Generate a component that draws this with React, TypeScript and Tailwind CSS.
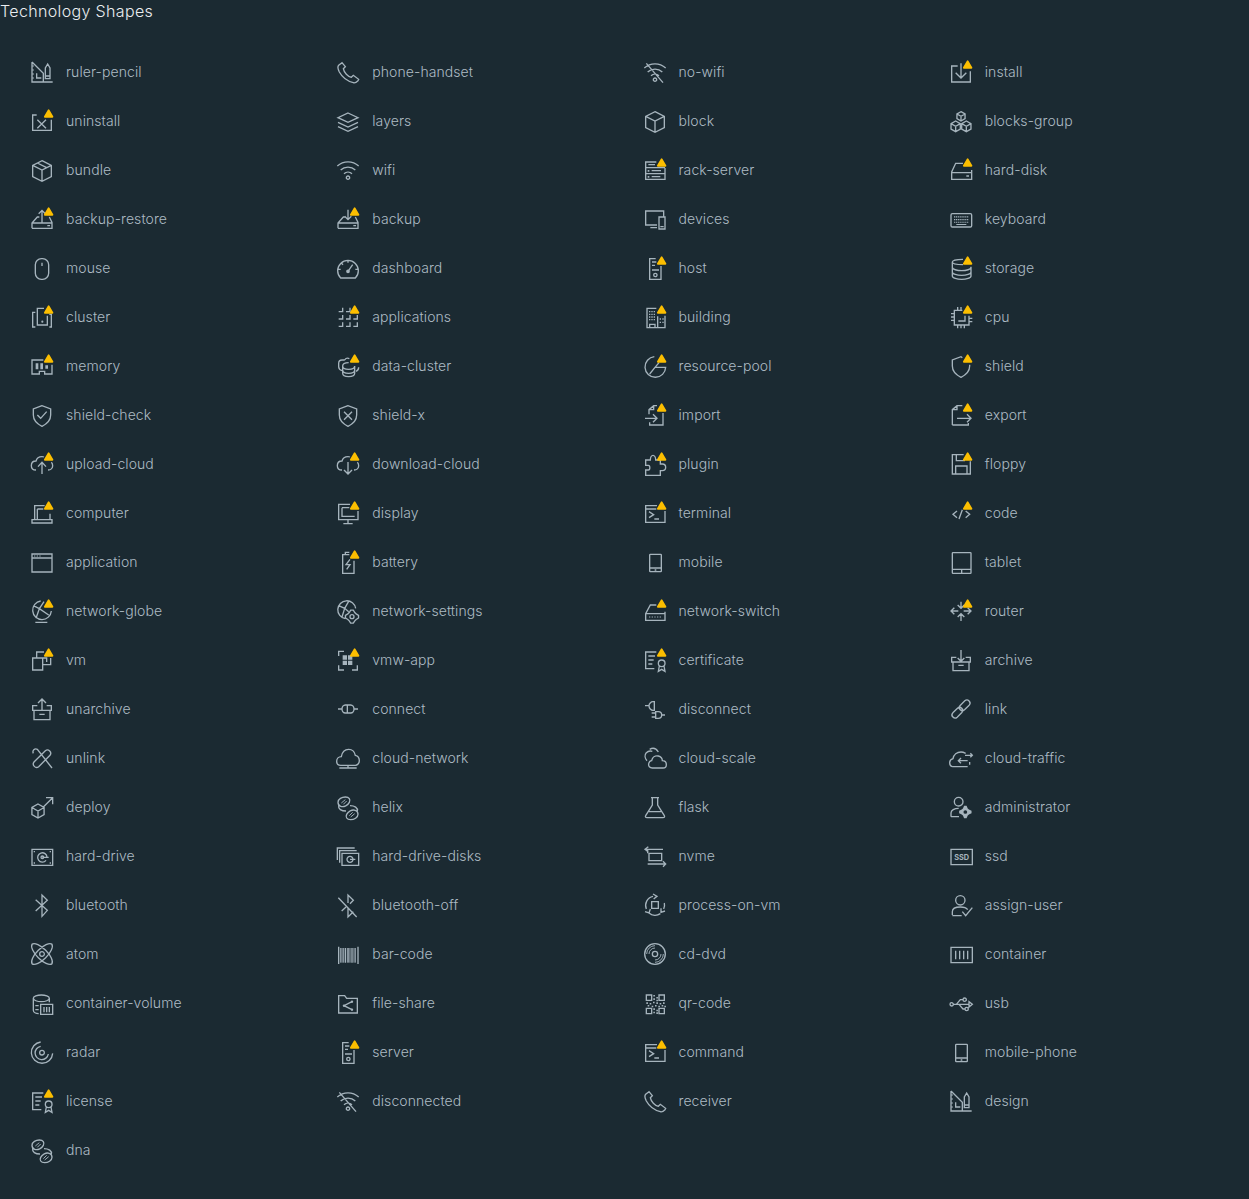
type Glyph = { d: string; thin?: string; fill?: string; label?: string };

// icons are drawn on Clarity's 36 unit grid and shown at 24px
const c = (x: number, y: number, r: number) => `M${x - r} ${y}a${r} ${r} 0 1 0 ${2 * r} 0a${r} ${r} 0 1 0 ${-2 * r} 0Z`;
const cube = (x: number, y: number, r: number) => {
  const w = r * 0.87;
  const h = r / 2;
  return `M${x} ${y - r}l${w} ${h}v${r}l${-w} ${h}l${-w} ${-h}v${-r}Z M${x - w} ${y - h}L${x} ${y}L${x + w} ${y - h} M${x} ${y}v${r}`;
};
const teeth = (x: number, y: number, R: number, r: number) => {
  let out = "";
  for (let i = 0; i < 16; i++) {
    const a = ((i + 0.5) / 16) * Math.PI * 2;
    const rad = Math.floor((i + 1) / 2) % 2 === 0 ? R : r;
    out += `${i === 0 ? "M" : "L"}${(x + rad * Math.cos(a)).toFixed(2)} ${(y + rad * Math.sin(a)).toFixed(2)}`;
  }
  return `${out}Z`;
};
const squares = (pts: number[][], s: number) => pts.map(([x, y]) => `M${x} ${y}h${s}v${s}h${-s}Z`).join(" ");
const keys = (y: number, from: number, n: number) =>
  squares(Array.from({ length: n }, (_, i) => [from + i * 2.8, y]), 1.8);
const cell = (x: number, y: number) => `M${x} ${y + 6}h6V${y}`;

const DISK = "M3 32V24L11 15H14 M29 15L33 23V32H3 M3 24H33 M26 28H30";
const SHIELD = "M18 4L5 9V18C5 26 10 31 18 35C26 31 31 26 31 18V9Z";
const WIFI = "M2 12A24 24 0 0 1 34 12 M7 18A16 16 0 0 1 29 18 M12 23.5A9 9 0 0 1 24 23.5";
const CLOUD_L = "M9 27C4.5 27 2 24 2 20.5C2 16 5 13.5 9 13.5C10 9.5 13.5 7 18 7C19 7 20 7 21 7.5";
const CLOUD_R = "M27 27C31 27 34 24 34 20.5C34 18.5 33.5 17 32 15.5";
const GLOBE = "M5 10L14 14.5L28 24 M14 14.5L21 4 M14 14.5L9 29";

const ruler: Glyph = {
  d: "M3 3V33H34 M3 3L20 20V33 M10 20V27H17 M23 28V12L26.5 6L30 12V28Z M23 24H30",
  thin: "M3 9H6 M3 15H6 M3 21H6 M3 27H6",
};
const phone: Glyph = { d: "M9 4L4 8C2 10 3 14 5 18C10 27 18 32 26 34C29 35 31 33 33 31L34 29L26 23L23 26C18 25 12 19 11 13L14 10Z" };
const noWifi: Glyph = { d: `${WIFI} ${c(18, 29.5, 2.5)} M5 5L30 34` };
const tower: Glyph = { d: `M19 4H10V35H27V15 M13.5 9H20 M13.5 14H18 M13.5 21H24 ${c(18.5, 28.5, 2.5)}` };
const shell: Glyph = { d: "M21 7H4V32H33V15 M4 12H20 M9 16L16 20.5L9 25 M17 27H24" };
const cert: Glyph = { d: `M20 6H4V31H17 M8 12H18 M8 18H16 M8 24H14 ${c(28, 23, 5)} M24.5 27L23 35L28 32L33 35L31.5 27` };
const helix: Glyph = {
  d: "M3 11C3 6 9 3 14 3C20 3 22 7 20 11C18 15 12 19 7 17C4 16 3 14 3 11Z M33 29C33 34 27 37 22 37C16 37 14 33 16 29C18 25 24 21 29 23C32 24 33 26 33 29Z M4 16C3 21 8 24 15 24 M32 24C33 19 28 16 21 16",
  thin: "M8 12L14 7 M11 14L16 9 M28 28L22 33 M25 26L20 31",
};
const mobile: Glyph = { d: "M11 6.5H26.5A1 1 0 0 1 27.5 7.5V31.5A1 1 0 0 1 26.5 32.5H11A1 1 0 0 1 10 31.5V7.5A1 1 0 0 1 11 6.5Z M10 27H27.5 M17.5 30H20" };

const icons: Record<string, Glyph> = {
  "ruler-pencil": ruler,
  "phone-handset": phone,
  "no-wifi": noWifi,
  install: { d: "M13 9H4V33H32V17 M18 5V27 M10 19L18 27L26 19" },
  uninstall: { d: "M10 9H4V32H32V16 M11 16L24 29 M24 16L11 29" },
  layers: { d: "M18 6L33 13L18 20L3 13Z M3 20L18 27L33 20 M3 26.5L18 33.5L33 26.5" },
  block: { d: "M18 4L32 11V28L18 35L4 28V11Z M4 11L18 18L32 11 M18 18V35" },
  "blocks-group": { d: `${cube(18, 11, 7)} ${cube(10, 26, 8)} ${cube(26, 26, 8)}` },
  bundle: { d: "M18 4L32 11V28L18 35L4 28V11Z M4 11L18 18L32 11 M18 18V35 M11 7.5L25 14.5" },
  wifi: { d: `${WIFI} ${c(18, 29.5, 2.5)}` },
  "rack-server": { d: "M20 6H4V32H33V15 M4 14.5H33 M4 23.5H33 M8 10H18 M13 19H27 M13 28H26", fill: squares([[7, 18], [7, 27]], 2.5) },
  "hard-disk": { d: "M21 8H10L4 21V32H34V18 M4 22H34 M26 27H30" },
  "backup-restore": { d: `${DISK} M18 23V5 M13 10L18 5L23 10` },
  backup: { d: `${DISK} M18 4V19 M13 14L18 19L23 14` },
  devices: { d: "M21 27H4V6H31V14 M11 31H21 M24 15H33V33H24Z M26 29.5H31" },
  keyboard: {
    d: "M5 10H32A2 2 0 0 1 34 12V28A2 2 0 0 1 32 30H5A2 2 0 0 1 3 28V12A2 2 0 0 1 5 10Z",
    fill: `${keys(14, 7.5, 8)} ${keys(18, 7.5, 8)} ${keys(22, 7.5, 8)} M11 25.5H26V27H11Z`,
  },
  mouse: { d: "M17 4H19A9 9 0 0 1 28 13V26A9 9 0 0 1 19 35H17A9 9 0 0 1 8 26V13A9 9 0 0 1 17 4Z M18 10V15" },
  dashboard: { d: "M7 33A15.5 15.5 0 1 1 29 33Z M18 23L25 13 M18 6V10 M3 20H7 M29 20H33 M7.5 10L10.5 13", fill: c(18, 23, 2.8) },
  host: tower,
  storage: { d: "M21 5C11 5 5 7 5 9V30C5 33 12 35 19 35S33 33 33 30V16 M5 9C5 12 14 13 21 13 M5 17C5 20 12 22 19 22S33 20 33 17 M5 24C5 27 12 29 19 29S33 27 33 24" },
  cluster: { d: "M21 5H11V30H26V16 M8 11H4V33H8 M29 14H32V33H29", fill: c(18.5, 25, 1.6) },
  applications: { d: `${cell(4, 4)} ${cell(15, 4)} ${cell(4, 15)} ${cell(15, 15)} ${cell(26, 15)} ${cell(4, 26)} ${cell(15, 26)} ${cell(26, 26)}` },
  building: {
    d: "M20 5H6V34H33V16 M22 17V34 M10 34V29H18V34",
    fill: squares([[9, 9], [12.5, 9], [16, 9], [9, 13], [12.5, 13], [16, 13], [9, 17], [12.5, 17], [16, 17], [9, 21], [12.5, 21], [16, 21], [25, 20], [29, 20], [25, 25], [29, 25]], 2),
  },
  cpu: { d: "M20 8H8V30H30V16 M24 16V24H14 M3 13H7 M3 18H7 M3 23H7 M31 20H35 M31 25H35 M13 3V7 M18 3V7 M13 31V35 M18 31V35 M23 31V35" },
  memory: { d: "M20 9H3V30H14V26H22V30H33V16", fill: squares([[8.5, 14], [15.5, 14]], 4) + " M23 17H27V22H23Z M8.5 18H12.5V23H8.5Z M15.5 18H19.5V23H15.5Z" },
  "data-cluster": {
    d: "M10 18V29C10 32 14 34 19 34S28 32 28 29V18 M10 18C10 15 14 13 19 13 M10 18C10 21 14 23 19 23S28 21 28 18 M10 24C10 27 14 29 19 29S28 27 28 24 M13 9H9C6 9 4 11 4 14V19C4 22 6 24 9 25 M13 9C15 6 18 6 20 7 M30 26C33 25 34 23 34 20",
  },
  "resource-pool": { d: "M17 4A15.5 15.5 0 1 0 34 20H18L10 30 M18 20L24 13" },
  shield: { d: "M20 5.5L18 4L5 9V18C5 26 10 31 18 35C26 31 31 26 31 18V16" },
  "shield-check": { d: `${SHIELD} M11 18L16 23L25 13` },
  "shield-x": { d: `${SHIELD} M12 13L24 25 M24 13L12 25` },
  import: { d: "M9 17V10L16 4H21 M30 15V33H10V29 M16 4V10H9 M3 23H20 M15 17L21 23L15 29" },
  export: { d: "M5 33V10L12 4H20 M5 33H29V30 M12 4V10H5 M12 23H33 M27 17L33 23L27 29" },
  "upload-cloud": { d: `${CLOUD_L} ${CLOUD_R} M18 33V16 M12 22L18 15.5L24 22` },
  "download-cloud": { d: `${CLOUD_L} ${CLOUD_R} M18 15V33 M12 27L18 33L24 27` },
  plugin: { d: "M4 12H11C11 8 13 5 15 5S19 8 19 12H26V18H29C32 18 34 20 34 23S32 28 29 28H26V35H4V27H8C11 27 11 20 8 20H4Z" },
  floppy: { d: "M22 4H5V33H32V14 M11 4V13H24 M10 33V21H27V33" },
  computer: { d: "M22 7H7V28 M30 19V28 M3 28H33V33H3Z M11 12H20 M11 12V28" },
  display: { d: "M21 5H4V28H33V15 M18 28V34 M11 34H25 M9 10H20 M9 10V23H28" },
  terminal: shell,
  code: { d: "M12 15L6 20L12 25 M15 27L20 13 M25 15L31 20L25 25" },
  application: { d: "M3 6H33V33H3Z M3 12H33", thin: "M6 9H8 M10 9H12 M14 9H16" },
  battery: { d: "M20 7H10V35H27V16 M14 7V3.5H20 M21 14L15 22H21L16 29" },
  mobile,
  tablet: { d: "M6 4H32A1 1 0 0 1 33 5V34A1 1 0 0 1 32 35H6A1 1 0 0 1 5 34V5A1 1 0 0 1 6 4Z M5 29H33 M19 29V35" },
  "network-globe": { d: `M16 3A14 14 0 1 0 32 18 ${GLOBE} M8 35H26` },
  "network-settings": {
    d: `M29.5 14A13.5 13.5 0 1 0 14 29.5 M4 10L13 14L19 19 M13 14L19 3.5 M13 14L9 27 ${teeth(24, 26.5, 10, 7.5)} ${c(24, 26.5, 3)}`,
  },
  "network-switch": { d: "M20 9H11L4 22V32H33V19 M4 22H33", thin: "M9 27H11 M13 27H15 M17 27H19 M21 27H23 M25 27H27" },
  router: { d: "M14 18H3 M8 13L3 18L8 23 M22 18H33 M28 13L33 18L28 23 M18 4V14 M13 9L18 14L23 9 M18 33V22 M13 27L18 22L23 27" },
  vm: { d: "M10 15V6H21 M31 15V25H19 M4 15H19V33H4Z M19 15H25V21", fill: squares([[24, 10]], 2) },
  "vmw-app": {
    d: "M12 5H4V12 M4 26V33H12 M24 33H32V26",
    fill: squares([[10, 11], [18, 11], [10, 19], [18, 19]], 6.5),
  },
  certificate: cert,
  archive: { d: "M18 3V20 M13 15L18 20L23 15 M11 14H4V21H32V14H25 M6 21V34H30V21 M14 26H22" },
  unarchive: { d: "M18 20V3 M12 9L18 3L24 9 M11 13H4V20H32V13H25 M6 20V34H30V20 M14 26H22" },
  connect: { d: "M3 18H9 M27 18H33 M14 12H22C25 12 27 15 27 18S25 24 22 24H14C11 24 9 21 9 18S11 12 14 12Z M17 12V24" },
  disconnect: { d: "M3 13H9 M9 13C9 10 12 7 15 7H17V20H15C12 20 9 17 9 13Z M19 22H23C26 22 28 24 28 27S26 32 23 32H19Z M28 27H33 M13 24H19 M13 30H19" },
  link: {
    d: "M23.75 5.75A4.6 4.6 0 0 1 30.25 12.25L23.25 19.25A4.6 4.6 0 0 1 16.75 12.75Z M19.25 23.25L12.25 30.25A4.6 4.6 0 0 1 5.75 23.75L12.75 16.75A4.6 4.6 0 0 1 19.25 23.25Z",
  },
  unlink: { d: "M23 7A5 5 0 0 1 30 14L13 31A5 5 0 0 1 6 24Z M5 11C3 7 7 3 11 5L33 33" },
  "cloud-network": { d: "M7 29C3 29 1 26 1 23C1 19 4 16 8 16C9 10 13 5 19 5C25 5 28 9 29 14C33 15 35 18 35 22C35 26 32 29 29 29Z M18 29V33 M5 33H31" },
  "cloud-scale": { d: "M14 33C10 33 8 30 8.5 27C9 24 11 22 13 22C14 17 18 14 23 15C27 16 29 19 29 22C33 22 35 25 35 28C35 31 33 33 30 33Z M6 22C3 19 2 14 5 10C7 8 11 7 14 8 M10 5C15 2 20 4 23 9" },
  "cloud-traffic": { d: "M5 31C2 30 1 27 1 25C1 22 3 20 6 19C7 13 12 9 18 9C20 9 23 10 25 11 M5 31H28 M31 24V28 M24 14H35 M32 11L35 14L32 17 M28 22H14 M18 18L14 22L18 26" },
  deploy: { d: `M34 4L20 18 M24 4H34V14 ${cube(12, 24, 10.5)}` },
  helix,
  flask: { d: "M12 4H24 M14 4V15L4 31C3 33 4 34 6 34H30C32 34 33 33 32 31L22 15V4 M9 25H27" },
  administrator: { d: `${c(14.5, 10, 6.5)} M3 32.5V27C3 23 8 20 14.5 20 M3 32.5H15`, fill: teeth(24.5, 25.5, 9.5, 6.5) + c(24.5, 25.5, 2.8) },
  "hard-drive": {
    d: `M3 8H34V32H3Z ${c(18.5, 20, 2)} M25.5 20A7 7 0 1 0 24 24.5 M18.5 20H28`,
    fill: squares([[5.5, 10.5], [29.5, 10.5], [5.5, 27.5], [29.5, 27.5]], 2),
  },
  "hard-drive-disks": { d: `M2 24V6H28 M5.5 28V10H31 M9 14H34V32H9Z ${c(21, 23, 4.5)} M21 23H29` },
  nvme: { d: "M9 14H28V25H9Z M7 14V8 M3 8H30 M8 4L3 8L8 12 M7 30H34 M30 26L34 30L30 34" },
  ssd: { d: "M3 8H35V31H3Z", label: "SSD" },
  bluetooth: { d: "M8.5 10L26 26L18 35V3L26 11L8.5 27" },
  "bluetooth-off": { d: "M3.5 7L31 36 M18 15V3L26 11L21 16 M18 22V36L26 28 M8.5 27L15 21" },
  "process-on-vm": { d: "M13 13H23V23H13Z M5 24A14 14 0 0 1 15 5 M15 1.5L21 5L16 9 M32 15A14 14 0 0 1 31 24 M33 27L27 29L27 23 M26 31A14 14 0 0 1 9 30 M3 28L9 30L11 24" },
  "assign-user": { d: `${c(17, 11, 7)} M5 33V28C5 23 10 21 17 21C22 21 26 22 28 25 M5 34H19 M20 28L25 34L35 22` },
  atom: { d: `M3.2 3.2A21 8.5 45 0 1 32.8 32.8A21 8.5 45 0 1 3.2 3.2Z M32.8 3.2A21 8.5 -45 0 1 3.2 32.8A21 8.5 -45 0 1 32.8 3.2Z ${c(18, 18, 3.5)}` },
  "bar-code": { d: "M4 7V33 M14 9V31 M24 9V31 M33 7V33", thin: "M7 9V31 M9 9V31 M11 9V31 M17 9V31 M19 9V31 M21 9V31 M27 9V31 M29 9V31" },
  "cd-dvd": { d: `${c(18, 18, 15.5)} ${c(18, 18, 4)}`, thin: "M9 18A9 9 0 0 1 18 9 M27 18A9 9 0 0 1 18 27 M5.5 18A12.5 12.5 0 0 1 18 5.5 M30.5 18A12.5 12.5 0 0 1 18 30.5" },
  container: { d: "M3 8H35V31H3Z M10 13V26 M16 13V26 M22 13V26 M28 13V26" },
  "container-volume": { d: "M5 11V29C5 32 9 34 13 34 M5 11C5 8 11 6 17 6S29 8 29 11V17 M5 11C5 14 11 16 17 16S29 14 29 11 M8 22H13 M8 28H13 M16 20H34V35H16Z M21 24V32 M25 24V32 M29 24V32" },
  "file-share": { d: "M4 7H13L16 11H32V33H4Z M24 16L12 22L24 28", fill: `${c(24, 16, 1.8)}${c(12, 22, 1.8)}${c(24, 28, 1.8)}` },
  "qr-code": {
    d: "M5 6H13V14H5Z M24 6H32V14H24Z M5 26H13V34H5Z M24 26H32V34H24Z",
    fill: squares([[15.5, 6], [20, 9], [15.5, 11], [20, 13], [5, 17], [10, 18], [15, 16], [20, 17], [25, 18], [30, 17], [7, 21], [13, 22], [18, 21], [23, 22], [28, 21], [32, 22], [15.5, 26], [20, 28], [15.5, 31], [20, 32]], 2.4),
  },
  usb: { d: `${c(4, 20, 2.5)} M6.5 20H30 M30 16V24L35 20Z M11 20L17 13H21 ${c(23.5, 13, 2.5)} M15 20L21 27H24 ${c(26.5, 27, 2.5)}` },
  radar: { d: `M16 3A16 16 0 1 0 34 20 M16 9.5A10 10 0 1 0 27.5 21 ${c(18, 19, 3.5)}` },
  server: tower,
  command: shell,
  "mobile-phone": mobile,
  license: cert,
  disconnected: noWifi,
  receiver: phone,
  design: ruler,
  dna: helix,
};

const warned = new Set([
  "install", "uninstall", "rack-server", "hard-disk", "backup-restore", "backup", "host", "storage", "cluster", "applications",
  "building", "cpu", "memory", "data-cluster", "resource-pool", "shield", "import", "export", "upload-cloud", "download-cloud",
  "plugin", "floppy", "computer", "display", "terminal", "code", "battery", "network-globe", "network-switch", "router", "vm",
  "vmw-app", "certificate", "server", "command", "license",
]);

function Shape({ name }: { name: string }) {
  const g = icons[name];
  return (
    <svg viewBox="0 0 36 36" className="h-6 w-6 shrink-0 overflow-visible text-[#a6b4bd]" fill="none" stroke="currentColor" strokeWidth={2}>
      <path d={g.d} />
      {g.thin && <path d={g.thin} strokeWidth={1.4} />}
      {g.fill && <path d={g.fill} fill="currentColor" fillRule="evenodd" stroke="none" />}
      {g.label && (
        <text x="19" y="24.5" textAnchor="middle" fill="currentColor" stroke="none" fontSize="11" fontWeight="700" className="[font-family:Inter,sans-serif]">
          {g.label}
        </text>
      )}
      {warned.has(name) && (
        <path
          d="M26.85 1.14L21.13 11A1.28 1.28 0 0 0 22.23 13H33.68A1.28 1.28 0 0 0 34.78 11L29.06 1.14A1.28 1.28 0 0 0 26.85 1.14Z"
          fill="#fcbe00"
          stroke="none"
        />
      )}
    </svg>
  );
}

export default function App() {
  return (
    <div className="h-[1199px] overflow-hidden bg-[#1b2a32] [font-family:Inter,sans-serif]">
      <h1 className="text-base leading-[22px] font-light tracking-[0.35px] text-[#eaedf0]">Technology Shapes</h1>
      <div className="mt-[25.5px] grid w-[1225px] grid-cols-4">
        {Object.keys(icons).map((name) => (
          <div key={name} className="flex h-[49px] items-center gap-3 pl-[30px]">
            <Shape name={name} />
            <span className="text-sm font-light tracking-[0.08px] text-[#adbbc4]">{name}</span>
          </div>
        ))}
      </div>
    </div>
  );
}
